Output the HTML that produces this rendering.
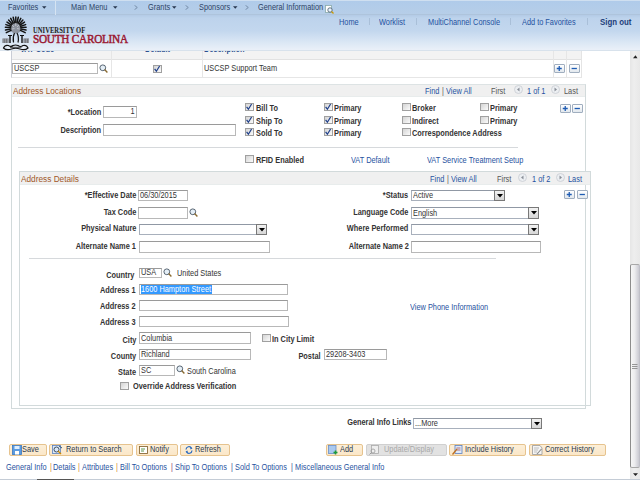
<!DOCTYPE html>
<html><head><meta charset="utf-8"><style>
html,body{margin:0;padding:0;width:640px;height:480px;overflow:hidden;background:#fff;position:relative}
body{font-family:"Liberation Sans",sans-serif}
.t{position:absolute;white-space:nowrap;line-height:10px}
</style></head><body>
<div style="position:absolute;left:11px;top:50px;width:571px;height:28px;box-sizing:border-box;border-left:1px solid #c9cdd6;border-right:1px solid #e4e4e4;border-bottom:1px solid #e6e6e6;background:#fff"></div>
<div style="position:absolute;left:12px;top:50px;width:569px;height:10px;background:#f3f3f3;border-bottom:1px solid #e2e2e2;box-sizing:border-box"></div>
<div style="position:absolute;left:111px;top:50px;width:1px;height:27px;background:#e6e6e6"></div>
<div style="position:absolute;left:202px;top:50px;width:1px;height:27px;background:#e6e6e6"></div>
<div style="position:absolute;left:552.5px;top:50px;width:1.0px;height:27px;background:#e6e6e6"></div>
<div style="position:absolute;left:566px;top:50px;width:1px;height:27px;background:#e6e6e6"></div>
<div class="t" style="left:20px;top:45px;font-size:8.20px;font-weight:bold;color:#2b4f8f;transform:scaleX(0.9);transform-origin:0 0;">VAT Code</div>
<div class="t" style="left:145px;top:45px;font-size:8.20px;font-weight:bold;color:#2b4f8f;transform:scaleX(0.9);transform-origin:0 0;">Default</div>
<div class="t" style="left:204px;top:45px;font-size:8.20px;font-weight:bold;color:#2b4f8f;transform:scaleX(0.9);transform-origin:0 0;">Description</div>
<div style="position:absolute;left:12px;top:63px;width:86px;height:11px;box-sizing:border-box;border:1px solid #b8b8b8;border-top-color:#9a9a9a;background:#fff"></div>
<div class="t" style="left:14px;top:64px;font-size:8.20px;font-weight:normal;color:#333;transform:scaleX(0.9);transform-origin:0 0;">USCSP</div>
<svg style="position:absolute;left:99px;top:64px" width="9" height="9"><circle cx="3.8" cy="3.8" r="2.9" fill="#e4eef6" stroke="#4a5866" stroke-width="0.9"/><path d="M5.6 5.6L8.4 8.4" stroke="#8a6a30" stroke-width="1.4"/></svg>
<div style="position:absolute;left:153px;top:65px;width:9px;height:8px;box-sizing:border-box;border:1px solid #a0a0a0;background:linear-gradient(135deg,#d4d4d4,#fbfbfb)"></div>
<svg style="position:absolute;left:153px;top:65px" width="8" height="8"><path d="M1.6 3.8L3.4 6.2L6.6 1" stroke="#1f3f8a" stroke-width="1.2" fill="none"/></svg>
<div class="t" style="left:204px;top:64px;font-size:8.20px;font-weight:normal;color:#333;transform:scaleX(0.9);transform-origin:0 0;">USCSP Support Team</div>
<div style="position:absolute;left:554px;top:64px;width:10.5px;height:9px;box-sizing:border-box;border:1px solid #a0aebf;border-radius:1px;background:linear-gradient(#ffffff,#e2e8ee)"></div>
<svg style="position:absolute;left:554px;top:64px" width="11" height="9"><path d="M5.25 2V7M2.75 4.5H7.75" stroke="#1f5cb4" stroke-width="1.3"/></svg>
<div style="position:absolute;left:569px;top:64px;width:10.5px;height:9px;box-sizing:border-box;border:1px solid #a0aebf;border-radius:1px;background:linear-gradient(#ffffff,#e2e8ee)"></div>
<svg style="position:absolute;left:569px;top:64px" width="11" height="9"><path d="M2.6 4.5H7.9" stroke="#1f5cb4" stroke-width="1.3"/></svg>
<div style="position:absolute;left:0px;top:0px;width:640px;height:15px;background:linear-gradient(#b0cbea,#b6cee8);border-top:1px solid #cfdff0;border-bottom:1px solid #aec4dc;box-sizing:border-box"></div>
<div style="position:absolute;left:0px;top:15px;width:640px;height:36px;background:linear-gradient(#b3cbe6 0px,#bdd3ec 3px,#c3d7ee 16px,#dce8f5 28px,#eaf0f8 35px,#d8e2ec 35px)"></div>
<div style="position:absolute;left:55px;top:1px;width:1px;height:14px;background:#d6e4f2"></div>
<div class="t" style="left:8px;top:3px;font-size:8.20px;font-weight:normal;color:#2e4466;transform:scaleX(0.9);transform-origin:0 0;">Favorites</div>
<div class="t" style="left:70.6px;top:3px;font-size:8.20px;font-weight:normal;color:#2e4466;transform:scaleX(0.9);transform-origin:0 0;">Main Menu</div>
<div class="t" style="left:147.5px;top:3px;font-size:8.20px;font-weight:normal;color:#2e4466;transform:scaleX(0.9);transform-origin:0 0;">Grants</div>
<div class="t" style="left:198.9px;top:3px;font-size:8.20px;font-weight:normal;color:#2e4466;transform:scaleX(0.9);transform-origin:0 0;">Sponsors</div>
<div class="t" style="left:258.4px;top:3px;font-size:8.20px;font-weight:normal;color:#2e4466;transform:scaleX(0.9);transform-origin:0 0;">General Information</div>
<svg style="position:absolute;left:42.3px;top:6px" width="5" height="3"><path d="M0 0.2H4.5L2.25 2.7Z" fill="#283850"/></svg>
<svg style="position:absolute;left:112.5px;top:6px" width="5" height="3"><path d="M0 0.2H4.5L2.25 2.7Z" fill="#283850"/></svg>
<svg style="position:absolute;left:172.3px;top:6px" width="5" height="3"><path d="M0 0.2H4.5L2.25 2.7Z" fill="#283850"/></svg>
<svg style="position:absolute;left:232.6px;top:6px" width="5" height="3"><path d="M0 0.2H4.5L2.25 2.7Z" fill="#283850"/></svg>
<svg style="position:absolute;left:133.5px;top:5px" width="4" height="5"><path d="M0.5 0.3L3.3 2.5L0.5 4.7" stroke="#6a7f9c" stroke-width="0.8" fill="none"/></svg>
<svg style="position:absolute;left:184.5px;top:5px" width="4" height="5"><path d="M0.5 0.3L3.3 2.5L0.5 4.7" stroke="#6a7f9c" stroke-width="0.8" fill="none"/></svg>
<svg style="position:absolute;left:244.5px;top:5px" width="4" height="5"><path d="M0.5 0.3L3.3 2.5L0.5 4.7" stroke="#6a7f9c" stroke-width="0.8" fill="none"/></svg>
<svg style="position:absolute;left:325px;top:5px" width="9" height="9"><rect x="0.5" y="0.5" width="6" height="7" fill="#fff" stroke="#8aa" stroke-width="0.8"/><circle cx="5" cy="5" r="2.2" fill="#e8f4ff" stroke="#456" stroke-width="0.8"/><path d="M6.5 6.5L8.5 8.5" stroke="#c90" stroke-width="1.2"/></svg>
<div class="t" style="left:338.5px;top:18px;font-size:8.20px;font-weight:normal;color:#1f52a0;transform:scaleX(0.9);transform-origin:0 0;">Home</div>
<div class="t" style="left:379.4px;top:18px;font-size:8.20px;font-weight:normal;color:#1f52a0;transform:scaleX(0.9);transform-origin:0 0;">Worklist</div>
<div class="t" style="left:427.8px;top:18px;font-size:8.20px;font-weight:normal;color:#1f52a0;transform:scaleX(0.9);transform-origin:0 0;">MultiChannel Console</div>
<div class="t" style="left:521.9px;top:18px;font-size:8.20px;font-weight:normal;color:#1f52a0;transform:scaleX(0.9);transform-origin:0 0;">Add to Favorites</div>
<div class="t" style="left:599.6px;top:17px;font-size:8.75px;font-weight:bold;color:#1f3f7a;transform:scaleX(0.9);transform-origin:0 0;">Sign out</div>
<div style="position:absolute;left:369px;top:18px;width:1px;height:7px;background:#a9bfd8"></div>
<div style="position:absolute;left:416px;top:18px;width:1px;height:7px;background:#a9bfd8"></div>
<div style="position:absolute;left:510px;top:18px;width:1px;height:7px;background:#a9bfd8"></div>
<div style="position:absolute;left:587px;top:18px;width:1px;height:7px;background:#a9bfd8"></div>
<div class="t" style="left:33px;top:25px;font-size:6.6px;font-weight:bold;color:#222;font-family:'Liberation Serif',serif;letter-spacing:0.02px;transform:scaleY(1.1);transform-origin:0 0">UNIVERSITY OF</div>
<div class="t" style="left:32.5px;top:31px;font-size:12.8px;line-height:16px;font-weight:normal;-webkit-text-stroke:0.5px #9a1832;color:#9a1832;font-family:'Liberation Serif',serif;letter-spacing:-0.3px;transform:scaleX(0.88);transform-origin:0 0">SOUTH CAROLINA</div>
<svg style="position:absolute;left:0px;top:15px" width="32" height="37" viewBox="0 15 32 37">
<ellipse cx="15.75" cy="27.5" rx="6" ry="6" fill="#8d939e"/>
<path d="M12 25L14 27M19 25L17 27M15.7 23V26M12 29L14.5 28.5M19.5 29L17 28.5" stroke="#c8ccd4" stroke-width="0.8"/><path d="M11.0 30.3L6.3 32.6" stroke="#141414" stroke-width="1.5" stroke-linecap="round"/><path d="M10.6 29.0L5.5 30.0" stroke="#141414" stroke-width="1.5" stroke-linecap="round"/><path d="M10.6 27.6L5.4 27.3" stroke="#141414" stroke-width="1.5" stroke-linecap="round"/><path d="M10.8 26.3L5.9 24.6" stroke="#141414" stroke-width="1.5" stroke-linecap="round"/><path d="M11.4 25.0L7.0 22.1" stroke="#141414" stroke-width="1.5" stroke-linecap="round"/><path d="M12.2 24.0L8.6 20.0" stroke="#141414" stroke-width="1.5" stroke-linecap="round"/><path d="M13.2 23.2L10.7 18.4" stroke="#141414" stroke-width="1.5" stroke-linecap="round"/><path d="M14.5 22.7L13.2 17.3" stroke="#141414" stroke-width="1.5" stroke-linecap="round"/><path d="M15.8 22.5L15.8 17.0" stroke="#141414" stroke-width="1.5" stroke-linecap="round"/><path d="M17.0 22.7L18.3 17.3" stroke="#141414" stroke-width="1.5" stroke-linecap="round"/><path d="M18.3 23.2L20.8 18.4" stroke="#141414" stroke-width="1.5" stroke-linecap="round"/><path d="M19.3 24.0L22.9 20.0" stroke="#141414" stroke-width="1.5" stroke-linecap="round"/><path d="M20.1 25.0L24.5 22.1" stroke="#141414" stroke-width="1.5" stroke-linecap="round"/><path d="M20.7 26.3L25.6 24.6" stroke="#141414" stroke-width="1.5" stroke-linecap="round"/><path d="M20.9 27.6L26.1 27.3" stroke="#141414" stroke-width="1.5" stroke-linecap="round"/><path d="M20.9 29.0L26.0 30.0" stroke="#141414" stroke-width="1.5" stroke-linecap="round"/><path d="M20.5 30.3L25.2 32.6" stroke="#141414" stroke-width="1.5" stroke-linecap="round"/>
<g fill="#6a6e74"><rect x="2.5" y="38.5" width="6" height="4.5"/><rect x="23.5" y="38.5" width="5.5" height="4.5"/></g>
<g stroke="#b8bcc4" stroke-width="0.6"><path d="M3.8 38.5V43M5.6 38.5V43M7.4 38.5V43M24.8 38.5V43M26.6 38.5V43M28.4 38.5V43"/></g>
<path d="M10 35.5V43M22 35.5V43" stroke="#111" stroke-width="1.4"/>
<path d="M8 35.5H12M20 35.5H24" stroke="#111" stroke-width="1"/>
<path d="M14.5 33Q12.5 37 13.5 42.5M17 33Q19.2 37 18 42.5" stroke="#111" stroke-width="1.2" fill="none"/>
<path d="M3.5 48Q5 44.5 8.5 45.5Q11 47.5 13 45.5Q15.5 44.5 18 45.5Q20.5 47.5 23 45.5Q26.5 44.5 28 48Q25 50.8 20 49Q15.7 47.5 11.5 49Q6.5 50.8 3.5 48Z" fill="none" stroke="#111" stroke-width="1.2"/>
<path d="M10 47.3H21.5" stroke="#333" stroke-width="0.9"/>
</svg>
<div style="position:absolute;left:11px;top:84px;width:575px;height:325px;box-sizing:border-box;border:1px solid #d2dadb;border-top-color:#dde3e4"></div>
<div style="position:absolute;left:12px;top:85px;width:573px;height:11px;background:#f0f0f0"></div>
<div style="position:absolute;left:12px;top:96px;width:573px;height:1px;background:#e8ecec"></div>
<div class="t" style="left:13px;top:86px;font-size:9.20px;font-weight:normal;color:#a0592a;transform:scaleX(0.9);transform-origin:0 0;">Address Locations</div>
<div class="t" style="left:425px;top:87px;font-size:8.20px;font-weight:normal;color:#1f52a0;transform:scaleX(0.9);transform-origin:0 0;">Find</div>
<div class="t" style="left:442.3px;top:87px;font-size:8.20px;font-weight:normal;color:#555;transform:scaleX(0.9);transform-origin:0 0;">|</div>
<div class="t" style="left:446px;top:87px;font-size:8.20px;font-weight:normal;color:#1f52a0;transform:scaleX(0.9);transform-origin:0 0;">View All</div>
<div class="t" style="left:491px;top:87px;font-size:8.20px;font-weight:normal;color:#555;transform:scaleX(0.9);transform-origin:0 0;">First</div>
<svg style="position:absolute;left:514px;top:85px" width="9" height="9"><circle cx="4.5" cy="4.5" r="4" fill="#eceff2" stroke="#c8ccd2" stroke-width="0.8"/><path d="M5.5 2.5L3 4.5L5.5 6.5Z" fill="#8a9099"/></svg>
<div class="t" style="left:527px;top:87px;font-size:8.20px;font-weight:normal;color:#1f52a0;transform:scaleX(0.9);transform-origin:0 0;">1 of 1</div>
<svg style="position:absolute;left:551px;top:85px" width="9" height="9"><circle cx="4.5" cy="4.5" r="4" fill="#eceff2" stroke="#c8ccd2" stroke-width="0.8"/><path d="M3.5 2.5L6 4.5L3.5 6.5Z" fill="#8a9099"/></svg>
<div class="t" style="left:563.5px;top:87px;font-size:8.20px;font-weight:normal;color:#555;transform:scaleX(0.9);transform-origin:0 0;">Last</div>
<div class="t" style="right:539px;top:108px;font-size:8.20px;font-weight:bold;color:#333;transform:scaleX(0.9);transform-origin:100% 0;">*Location</div>
<div style="position:absolute;left:103px;top:106px;width:34px;height:11.5px;box-sizing:border-box;border:1px solid #b8b8b8;border-top-color:#9a9a9a;background:#fff"></div>
<div class="t" style="right:505px;top:107px;font-size:8.20px;font-weight:normal;color:#333;transform:scaleX(0.9);transform-origin:100% 0;">1</div>
<div class="t" style="right:539px;top:126px;font-size:8.20px;font-weight:bold;color:#333;transform:scaleX(0.9);transform-origin:100% 0;">Description</div>
<div style="position:absolute;left:103px;top:124px;width:133px;height:11.5px;box-sizing:border-box;border:1px solid #b8b8b8;border-top-color:#9a9a9a;background:#fff"></div>
<div style="position:absolute;left:245px;top:103px;width:9px;height:8px;box-sizing:border-box;border:1px solid #a0a0a0;background:linear-gradient(135deg,#d4d4d4,#fbfbfb)"></div>
<svg style="position:absolute;left:245px;top:103px" width="8" height="8"><path d="M1.6 3.8L3.4 6.2L6.6 1" stroke="#1f3f8a" stroke-width="1.2" fill="none"/></svg>
<div class="t" style="left:256px;top:104px;font-size:8.20px;font-weight:bold;color:#333;transform:scaleX(0.9);transform-origin:0 0;">Bill To</div>
<div style="position:absolute;left:324px;top:103px;width:9px;height:8px;box-sizing:border-box;border:1px solid #a0a0a0;background:linear-gradient(135deg,#d4d4d4,#fbfbfb)"></div>
<svg style="position:absolute;left:324px;top:103px" width="8" height="8"><path d="M1.6 3.8L3.4 6.2L6.6 1" stroke="#1f3f8a" stroke-width="1.2" fill="none"/></svg>
<div class="t" style="left:334px;top:104px;font-size:8.20px;font-weight:bold;color:#333;transform:scaleX(0.9);transform-origin:0 0;">Primary</div>
<div style="position:absolute;left:245px;top:116px;width:9px;height:8px;box-sizing:border-box;border:1px solid #a0a0a0;background:linear-gradient(135deg,#d4d4d4,#fbfbfb)"></div>
<svg style="position:absolute;left:245px;top:116px" width="8" height="8"><path d="M1.6 3.8L3.4 6.2L6.6 1" stroke="#1f3f8a" stroke-width="1.2" fill="none"/></svg>
<div class="t" style="left:256px;top:117px;font-size:8.20px;font-weight:bold;color:#333;transform:scaleX(0.9);transform-origin:0 0;">Ship To</div>
<div style="position:absolute;left:324px;top:116px;width:9px;height:8px;box-sizing:border-box;border:1px solid #a0a0a0;background:linear-gradient(135deg,#d4d4d4,#fbfbfb)"></div>
<svg style="position:absolute;left:324px;top:116px" width="8" height="8"><path d="M1.6 3.8L3.4 6.2L6.6 1" stroke="#1f3f8a" stroke-width="1.2" fill="none"/></svg>
<div class="t" style="left:334px;top:117px;font-size:8.20px;font-weight:bold;color:#333;transform:scaleX(0.9);transform-origin:0 0;">Primary</div>
<div style="position:absolute;left:245px;top:128px;width:9px;height:8px;box-sizing:border-box;border:1px solid #a0a0a0;background:linear-gradient(135deg,#d4d4d4,#fbfbfb)"></div>
<svg style="position:absolute;left:245px;top:128px" width="8" height="8"><path d="M1.6 3.8L3.4 6.2L6.6 1" stroke="#1f3f8a" stroke-width="1.2" fill="none"/></svg>
<div class="t" style="left:256px;top:129px;font-size:8.20px;font-weight:bold;color:#333;transform:scaleX(0.9);transform-origin:0 0;">Sold To</div>
<div style="position:absolute;left:324px;top:128px;width:9px;height:8px;box-sizing:border-box;border:1px solid #a0a0a0;background:linear-gradient(135deg,#d4d4d4,#fbfbfb)"></div>
<svg style="position:absolute;left:324px;top:128px" width="8" height="8"><path d="M1.6 3.8L3.4 6.2L6.6 1" stroke="#1f3f8a" stroke-width="1.2" fill="none"/></svg>
<div class="t" style="left:334px;top:129px;font-size:8.20px;font-weight:bold;color:#333;transform:scaleX(0.9);transform-origin:0 0;">Primary</div>
<div style="position:absolute;left:402px;top:103px;width:9px;height:8px;box-sizing:border-box;border:1px solid #a0a0a0;background:linear-gradient(135deg,#d4d4d4,#fbfbfb)"></div>
<div class="t" style="left:412px;top:104px;font-size:8.20px;font-weight:bold;color:#333;transform:scaleX(0.9);transform-origin:0 0;">Broker</div>
<div style="position:absolute;left:480px;top:103px;width:9px;height:8px;box-sizing:border-box;border:1px solid #a0a0a0;background:linear-gradient(135deg,#d4d4d4,#fbfbfb)"></div>
<div class="t" style="left:490px;top:104px;font-size:8.20px;font-weight:bold;color:#333;transform:scaleX(0.9);transform-origin:0 0;">Primary</div>
<div style="position:absolute;left:402px;top:116px;width:9px;height:8px;box-sizing:border-box;border:1px solid #a0a0a0;background:linear-gradient(135deg,#d4d4d4,#fbfbfb)"></div>
<div class="t" style="left:412px;top:117px;font-size:8.20px;font-weight:bold;color:#333;transform:scaleX(0.9);transform-origin:0 0;">Indirect</div>
<div style="position:absolute;left:480px;top:116px;width:9px;height:8px;box-sizing:border-box;border:1px solid #a0a0a0;background:linear-gradient(135deg,#d4d4d4,#fbfbfb)"></div>
<div class="t" style="left:490px;top:117px;font-size:8.20px;font-weight:bold;color:#333;transform:scaleX(0.9);transform-origin:0 0;">Primary</div>
<div style="position:absolute;left:402px;top:128px;width:9px;height:8px;box-sizing:border-box;border:1px solid #a0a0a0;background:linear-gradient(135deg,#d4d4d4,#fbfbfb)"></div>
<div class="t" style="left:412px;top:129px;font-size:8.20px;font-weight:bold;color:#333;transform:scaleX(0.9);transform-origin:0 0;">Correspondence Address</div>
<div style="position:absolute;left:560px;top:104px;width:10.5px;height:9px;box-sizing:border-box;border:1px solid #a0aebf;border-radius:1px;background:linear-gradient(#ffffff,#e2e8ee)"></div>
<svg style="position:absolute;left:560px;top:104px" width="11" height="9"><path d="M5.25 2V7M2.75 4.5H7.75" stroke="#1f5cb4" stroke-width="1.3"/></svg>
<div style="position:absolute;left:572px;top:104px;width:10.5px;height:9px;box-sizing:border-box;border:1px solid #a0aebf;border-radius:1px;background:linear-gradient(#ffffff,#e2e8ee)"></div>
<svg style="position:absolute;left:572px;top:104px" width="11" height="9"><path d="M2.6 4.5H7.9" stroke="#1f5cb4" stroke-width="1.3"/></svg>
<div style="position:absolute;left:18px;top:147px;width:500px;height:1px;background:#d6d9dc"></div>
<div style="position:absolute;left:245px;top:155px;width:9px;height:8px;box-sizing:border-box;border:1px solid #a0a0a0;background:linear-gradient(135deg,#d4d4d4,#fbfbfb)"></div>
<div class="t" style="left:256px;top:156px;font-size:8.20px;font-weight:bold;color:#333;transform:scaleX(0.9);transform-origin:0 0;">RFID Enabled</div>
<div class="t" style="left:351px;top:156px;font-size:8.20px;font-weight:normal;color:#1f52a0;transform:scaleX(0.9);transform-origin:0 0;">VAT Default</div>
<div class="t" style="left:427px;top:156px;font-size:8.20px;font-weight:normal;color:#1f52a0;transform:scaleX(0.9);transform-origin:0 0;">VAT Service Treatment Setup</div>
<div style="position:absolute;left:19px;top:171px;width:572px;height:235px;box-sizing:border-box;border:1px solid #d2dadb"></div>
<div style="position:absolute;left:20px;top:172px;width:570px;height:12px;background:#f0f0f0"></div>
<div style="position:absolute;left:20px;top:184px;width:570px;height:1px;background:#e8ecec"></div>
<div class="t" style="left:21px;top:174px;font-size:9.20px;font-weight:normal;color:#a0592a;transform:scaleX(0.9);transform-origin:0 0;">Address Details</div>
<div class="t" style="left:429.7px;top:175px;font-size:8.20px;font-weight:normal;color:#1f52a0;transform:scaleX(0.9);transform-origin:0 0;">Find</div>
<div class="t" style="left:446.8px;top:175px;font-size:8.20px;font-weight:normal;color:#555;transform:scaleX(0.9);transform-origin:0 0;">|</div>
<div class="t" style="left:451.2px;top:175px;font-size:8.20px;font-weight:normal;color:#1f52a0;transform:scaleX(0.9);transform-origin:0 0;">View All</div>
<div class="t" style="left:497px;top:175px;font-size:8.20px;font-weight:normal;color:#555;transform:scaleX(0.9);transform-origin:0 0;">First</div>
<svg style="position:absolute;left:517.5px;top:172.5px" width="9" height="9"><circle cx="4.5" cy="4.5" r="4" fill="#eceff2" stroke="#c8ccd2" stroke-width="0.8"/><path d="M5.5 2.5L3 4.5L5.5 6.5Z" fill="#8a9099"/></svg>
<div class="t" style="left:532px;top:175px;font-size:8.20px;font-weight:normal;color:#1f52a0;transform:scaleX(0.9);transform-origin:0 0;">1 of 2</div>
<svg style="position:absolute;left:556px;top:172.5px" width="9" height="9"><circle cx="4.5" cy="4.5" r="4" fill="#eceff2" stroke="#c8ccd2" stroke-width="0.8"/><path d="M3.5 2.5L6 4.5L3.5 6.5Z" fill="#8a9099"/></svg>
<div class="t" style="left:568px;top:175px;font-size:8.20px;font-weight:normal;color:#1f52a0;transform:scaleX(0.9);transform-origin:0 0;">Last</div>
<div class="t" style="right:504px;top:191px;font-size:8.20px;font-weight:bold;color:#333;transform:scaleX(0.9);transform-origin:100% 0;">*Effective Date</div>
<div style="position:absolute;left:138px;top:190px;width:50px;height:11px;box-sizing:border-box;border:1px solid #b8b8b8;border-top-color:#9a9a9a;background:#fff"></div>
<div class="t" style="left:140px;top:191px;font-size:8.20px;font-weight:normal;color:#333;transform:scaleX(0.9);transform-origin:0 0;">06/30/2015</div>
<div class="t" style="right:504px;top:208px;font-size:8.20px;font-weight:bold;color:#333;transform:scaleX(0.9);transform-origin:100% 0;">Tax Code</div>
<div style="position:absolute;left:138px;top:207px;width:50px;height:11.5px;box-sizing:border-box;border:1px solid #b8b8b8;border-top-color:#9a9a9a;background:#fff"></div>
<svg style="position:absolute;left:189px;top:208px" width="9" height="9"><circle cx="3.8" cy="3.8" r="2.9" fill="#e4eef6" stroke="#4a5866" stroke-width="0.9"/><path d="M5.6 5.6L8.4 8.4" stroke="#8a6a30" stroke-width="1.4"/></svg>
<div class="t" style="right:504px;top:224px;font-size:8.20px;font-weight:bold;color:#333;transform:scaleX(0.9);transform-origin:100% 0;">Physical Nature</div>
<div style="position:absolute;left:139px;top:224px;width:128px;height:11px;box-sizing:border-box;border:1px solid #a8b0bc;border-top-color:#9098a4;background:#fff"></div>
<div style="position:absolute;left:256px;top:224px;width:11px;height:11px;box-sizing:border-box;border:1px solid #787878;background:linear-gradient(#f2f2f2,#d6d6d6)"></div>
<svg style="position:absolute;left:258.5px;top:228.0px" width="6" height="4"><path d="M0 0H6L3 3.5Z" fill="#000"/></svg>
<div class="t" style="right:504px;top:242px;font-size:8.20px;font-weight:bold;color:#333;transform:scaleX(0.9);transform-origin:100% 0;">Alternate Name 1</div>
<div style="position:absolute;left:139px;top:241px;width:131px;height:12px;box-sizing:border-box;border:1px solid #b8b8b8;border-top-color:#9a9a9a;background:#fff"></div>
<div class="t" style="right:231.5px;top:191px;font-size:8.20px;font-weight:bold;color:#333;transform:scaleX(0.9);transform-origin:100% 0;">*Status</div>
<div style="position:absolute;left:411px;top:190px;width:94px;height:11px;box-sizing:border-box;border:1px solid #a8b0bc;border-top-color:#9098a4;background:#fff"></div>
<div style="position:absolute;left:494px;top:190px;width:11px;height:11px;box-sizing:border-box;border:1px solid #787878;background:linear-gradient(#f2f2f2,#d6d6d6)"></div>
<svg style="position:absolute;left:496.5px;top:194.0px" width="6" height="4"><path d="M0 0H6L3 3.5Z" fill="#000"/></svg>
<div class="t" style="left:413px;top:191px;font-size:8.20px;font-weight:normal;color:#333;transform:scaleX(0.9);transform-origin:0 0;">Active</div>
<div class="t" style="right:231.5px;top:208px;font-size:8.20px;font-weight:bold;color:#333;transform:scaleX(0.9);transform-origin:100% 0;">Language Code</div>
<div style="position:absolute;left:411px;top:207px;width:128px;height:11.5px;box-sizing:border-box;border:1px solid #a8b0bc;border-top-color:#9098a4;background:#fff"></div>
<div style="position:absolute;left:528px;top:207px;width:11px;height:11.5px;box-sizing:border-box;border:1px solid #787878;background:linear-gradient(#f2f2f2,#d6d6d6)"></div>
<svg style="position:absolute;left:530.5px;top:211.25px" width="6" height="4"><path d="M0 0H6L3 3.5Z" fill="#000"/></svg>
<div class="t" style="left:413px;top:209px;font-size:8.20px;font-weight:normal;color:#333;transform:scaleX(0.9);transform-origin:0 0;">English</div>
<div class="t" style="right:231.5px;top:224px;font-size:8.20px;font-weight:bold;color:#333;transform:scaleX(0.9);transform-origin:100% 0;">Where Performed</div>
<div style="position:absolute;left:411px;top:224px;width:128px;height:11px;box-sizing:border-box;border:1px solid #a8b0bc;border-top-color:#9098a4;background:#fff"></div>
<div style="position:absolute;left:528px;top:224px;width:11px;height:11px;box-sizing:border-box;border:1px solid #787878;background:linear-gradient(#f2f2f2,#d6d6d6)"></div>
<svg style="position:absolute;left:530.5px;top:228.0px" width="6" height="4"><path d="M0 0H6L3 3.5Z" fill="#000"/></svg>
<div class="t" style="right:231.5px;top:242px;font-size:8.20px;font-weight:bold;color:#333;transform:scaleX(0.9);transform-origin:100% 0;">Alternate Name 2</div>
<div style="position:absolute;left:411px;top:241px;width:130px;height:12px;box-sizing:border-box;border:1px solid #b8b8b8;border-top-color:#9a9a9a;background:#fff"></div>
<div style="position:absolute;left:564px;top:190px;width:10.5px;height:9px;box-sizing:border-box;border:1px solid #a0aebf;border-radius:1px;background:linear-gradient(#ffffff,#e2e8ee)"></div>
<svg style="position:absolute;left:564px;top:190px" width="11" height="9"><path d="M5.25 2V7M2.75 4.5H7.75" stroke="#1f5cb4" stroke-width="1.3"/></svg>
<div style="position:absolute;left:577px;top:190px;width:10.5px;height:9px;box-sizing:border-box;border:1px solid #a0aebf;border-radius:1px;background:linear-gradient(#ffffff,#e2e8ee)"></div>
<svg style="position:absolute;left:577px;top:190px" width="11" height="9"><path d="M2.6 4.5H7.9" stroke="#1f5cb4" stroke-width="1.3"/></svg>
<div style="position:absolute;left:29px;top:258px;width:467px;height:1px;background:#d6d9dc"></div>
<div class="t" style="right:505.5px;top:271px;font-size:8.20px;font-weight:bold;color:#333;transform:scaleX(0.9);transform-origin:100% 0;">Country</div>
<div style="position:absolute;left:139px;top:267.5px;width:23px;height:10.0px;box-sizing:border-box;border:1px solid #b8b8b8;border-top-color:#9a9a9a;background:#fff"></div>
<div class="t" style="left:141px;top:268px;font-size:8.20px;font-weight:normal;color:#333;transform:scaleX(0.9);transform-origin:0 0;">USA</div>
<svg style="position:absolute;left:163px;top:268px" width="9" height="9"><circle cx="3.8" cy="3.8" r="2.9" fill="#e4eef6" stroke="#4a5866" stroke-width="0.9"/><path d="M5.6 5.6L8.4 8.4" stroke="#8a6a30" stroke-width="1.4"/></svg>
<div class="t" style="left:177px;top:269px;font-size:8.20px;font-weight:normal;color:#333;transform:scaleX(0.9);transform-origin:0 0;">United States</div>
<div class="t" style="right:504.2px;top:286px;font-size:8.20px;font-weight:bold;color:#333;transform:scaleX(0.9);transform-origin:100% 0;">Address 1</div>
<div style="position:absolute;left:139px;top:284px;width:149px;height:10.5px;box-sizing:border-box;border:1px solid #b8b8b8;border-top-color:#9a9a9a;background:#fff"></div>
<div style="position:absolute;left:141px;top:285px;width:71px;height:9px;background:#3399ff"></div>
<div class="t" style="left:141px;top:285px;font-size:8.20px;font-weight:normal;color:#fff;transform:scaleX(0.9);transform-origin:0 0;">1600 Hampton Street</div>
<div class="t" style="right:504.2px;top:302px;font-size:8.20px;font-weight:bold;color:#333;transform:scaleX(0.9);transform-origin:100% 0;">Address 2</div>
<div style="position:absolute;left:139px;top:300px;width:149px;height:11px;box-sizing:border-box;border:1px solid #b8b8b8;border-top-color:#9a9a9a;background:#fff"></div>
<div class="t" style="right:504.2px;top:318px;font-size:8.20px;font-weight:bold;color:#333;transform:scaleX(0.9);transform-origin:100% 0;">Address 3</div>
<div style="position:absolute;left:139px;top:316px;width:150px;height:11px;box-sizing:border-box;border:1px solid #b8b8b8;border-top-color:#9a9a9a;background:#fff"></div>
<div class="t" style="left:410.3px;top:303px;font-size:8.20px;font-weight:normal;color:#1f52a0;transform:scaleX(0.9);transform-origin:0 0;">View Phone Information</div>
<div class="t" style="right:503.7px;top:336px;font-size:8.20px;font-weight:bold;color:#333;transform:scaleX(0.9);transform-origin:100% 0;">City</div>
<div style="position:absolute;left:139px;top:332px;width:112px;height:11.5px;box-sizing:border-box;border:1px solid #b8b8b8;border-top-color:#9a9a9a;background:#fff"></div>
<div class="t" style="left:141px;top:334px;font-size:8.20px;font-weight:normal;color:#333;transform:scaleX(0.9);transform-origin:0 0;">Columbia</div>
<div style="position:absolute;left:262px;top:334px;width:9px;height:8px;box-sizing:border-box;border:1px solid #a0a0a0;background:linear-gradient(135deg,#d4d4d4,#fbfbfb)"></div>
<div class="t" style="left:272px;top:335px;font-size:8.20px;font-weight:bold;color:#333;transform:scaleX(0.9);transform-origin:0 0;">In City Limit</div>
<div class="t" style="right:503.7px;top:352px;font-size:8.20px;font-weight:bold;color:#333;transform:scaleX(0.9);transform-origin:100% 0;">County</div>
<div style="position:absolute;left:139px;top:349px;width:112px;height:10.5px;box-sizing:border-box;border:1px solid #b8b8b8;border-top-color:#9a9a9a;background:#fff"></div>
<div class="t" style="left:141px;top:350px;font-size:8.20px;font-weight:normal;color:#333;transform:scaleX(0.9);transform-origin:0 0;">Richland</div>
<div class="t" style="right:319px;top:352px;font-size:8.20px;font-weight:bold;color:#333;transform:scaleX(0.9);transform-origin:100% 0;">Postal</div>
<div style="position:absolute;left:323.5px;top:348.5px;width:63.0px;height:11.0px;box-sizing:border-box;border:1px solid #b8b8b8;border-top-color:#9a9a9a;background:#fff"></div>
<div class="t" style="left:325.5px;top:350px;font-size:8.20px;font-weight:normal;color:#333;transform:scaleX(0.9);transform-origin:0 0;">29208-3403</div>
<div class="t" style="right:503.7px;top:368px;font-size:8.20px;font-weight:bold;color:#333;transform:scaleX(0.9);transform-origin:100% 0;">State</div>
<div style="position:absolute;left:139px;top:364.5px;width:35.5px;height:11.0px;box-sizing:border-box;border:1px solid #b8b8b8;border-top-color:#9a9a9a;background:#fff"></div>
<div class="t" style="left:141px;top:366px;font-size:8.20px;font-weight:normal;color:#333;transform:scaleX(0.9);transform-origin:0 0;">SC</div>
<svg style="position:absolute;left:176px;top:365px" width="9" height="9"><circle cx="3.8" cy="3.8" r="2.9" fill="#e4eef6" stroke="#4a5866" stroke-width="0.9"/><path d="M5.6 5.6L8.4 8.4" stroke="#8a6a30" stroke-width="1.4"/></svg>
<div class="t" style="left:187px;top:367px;font-size:8.20px;font-weight:normal;color:#333;transform:scaleX(0.9);transform-origin:0 0;">South Carolina</div>
<div style="position:absolute;left:120px;top:382px;width:9px;height:8px;box-sizing:border-box;border:1px solid #a0a0a0;background:linear-gradient(135deg,#d4d4d4,#fbfbfb)"></div>
<div class="t" style="left:133px;top:382px;font-size:8.20px;font-weight:bold;color:#333;transform:scaleX(0.9);transform-origin:0 0;">Override Address Verification</div>
<div class="t" style="right:229px;top:418px;font-size:8.20px;font-weight:bold;color:#333;transform:scaleX(0.9);transform-origin:100% 0;">General Info Links</div>
<div style="position:absolute;left:413px;top:418px;width:129px;height:10.5px;box-sizing:border-box;border:1px solid #a8b0bc;border-top-color:#9098a4;background:#fff"></div>
<div style="position:absolute;left:531px;top:418px;width:11px;height:10.5px;box-sizing:border-box;border:1px solid #787878;background:linear-gradient(#f2f2f2,#d6d6d6)"></div>
<svg style="position:absolute;left:533.5px;top:421.75px" width="6" height="4"><path d="M0 0H6L3 3.5Z" fill="#000"/></svg>
<div class="t" style="left:415px;top:419px;font-size:8.20px;font-weight:normal;color:#333;transform:scaleX(0.9);transform-origin:0 0;">...More</div>
<div style="position:absolute;left:9px;top:443.6px;width:38px;height:12.399999999999977px;box-sizing:border-box;border:1px solid #e6c38e;border-radius:2px;background:linear-gradient(#fcefd9,#fbe7c8)"></div>
<div class="t" style="left:22px;top:445px;font-size:8.20px;font-weight:normal;color:#2a3a4e;transform:scaleX(0.9);transform-origin:0 0;">Save</div>
<svg style="position:absolute;left:11.5px;top:444.5px" width="11" height="10" viewBox="0 0 11 10"><rect x="0.5" y="0.5" width="9" height="9" fill="#5b9be0" stroke="#3a78c0" stroke-width="0.8"/><rect x="2.5" y="1" width="5" height="3" fill="#dfefff"/><rect x="3" y="6" width="4" height="3.5" fill="#fff"/></svg>
<div style="position:absolute;left:49px;top:443.6px;width:84px;height:12.399999999999977px;box-sizing:border-box;border:1px solid #e6c38e;border-radius:2px;background:linear-gradient(#fcefd9,#fbe7c8)"></div>
<div class="t" style="left:65.8px;top:445px;font-size:8.20px;font-weight:normal;color:#2a3a4e;transform:scaleX(0.9);transform-origin:0 0;">Return to Search</div>
<svg style="position:absolute;left:52px;top:444.5px" width="11" height="10" viewBox="0 0 11 10"><rect x="0.5" y="0.5" width="8" height="8" fill="#dbe8f8" stroke="#5a80c0" stroke-width="0.8"/><circle cx="4.5" cy="4.5" r="2.5" fill="none" stroke="#345" stroke-width="0.9"/><path d="M6 6L9 9" stroke="#c80" stroke-width="1.2"/><path d="M7 1L10 3" stroke="#357" stroke-width="1"/></svg>
<div style="position:absolute;left:135.5px;top:443.6px;width:42.5px;height:12.399999999999977px;box-sizing:border-box;border:1px solid #e6c38e;border-radius:2px;background:linear-gradient(#fcefd9,#fbe7c8)"></div>
<div class="t" style="left:149.8px;top:445px;font-size:8.20px;font-weight:normal;color:#2a3a4e;transform:scaleX(0.9);transform-origin:0 0;">Notify</div>
<svg style="position:absolute;left:139px;top:444.5px" width="11" height="10" viewBox="0 0 11 10"><rect x="0.5" y="1.5" width="8" height="7" fill="#fff" stroke="#8a6a3a" stroke-width="0.9"/><path d="M2 4H6M2 6H5" stroke="#4a8a3a" stroke-width="0.9"/></svg>
<div style="position:absolute;left:180px;top:443.6px;width:49.5px;height:12.399999999999977px;box-sizing:border-box;border:1px solid #e6c38e;border-radius:2px;background:linear-gradient(#fcefd9,#fbe7c8)"></div>
<div class="t" style="left:195px;top:445px;font-size:8.20px;font-weight:normal;color:#2a3a4e;transform:scaleX(0.9);transform-origin:0 0;">Refresh</div>
<svg style="position:absolute;left:183.5px;top:444.5px" width="11" height="10" viewBox="0 0 11 10"><path d="M2 4.5A3 3 0 0 1 7.5 3" stroke="#2a6ac0" stroke-width="1.2" fill="none"/><path d="M8 5.5A3 3 0 0 1 2.5 7" stroke="#2a6ac0" stroke-width="1.2" fill="none"/><path d="M6 1.5L8.5 3.5L6.5 4.5Z" fill="#2a6ac0"/><path d="M4 8.5L1.5 6.5L3.5 5.5Z" fill="#2a6ac0"/></svg>
<div style="position:absolute;left:325.5px;top:443.6px;width:37.5px;height:12.399999999999977px;box-sizing:border-box;border:1px solid #e6c38e;border-radius:2px;background:linear-gradient(#fcefd9,#fbe7c8)"></div>
<div class="t" style="left:340px;top:445px;font-size:8.20px;font-weight:normal;color:#2a3a4e;transform:scaleX(0.9);transform-origin:0 0;">Add</div>
<svg style="position:absolute;left:328px;top:444.5px" width="11" height="10" viewBox="0 0 11 10"><rect x="0.5" y="0.5" width="7.5" height="8" fill="#a9c9f0" stroke="#6a90c8" stroke-width="0.8"/><path d="M7.5 5.5V9.5M5.5 7.5H9.5" stroke="#1e9a3a" stroke-width="1.5"/></svg>
<div style="position:absolute;left:365.5px;top:443.6px;width:81.0px;height:12.399999999999977px;box-sizing:border-box;border:1px solid #d0d0d0;border-radius:2px;background:#e2e2e2"></div>
<div class="t" style="left:383.5px;top:445px;font-size:8.20px;font-weight:normal;color:#a8a8a8;transform:scaleX(0.9);transform-origin:0 0;">Update/Display</div>
<svg style="position:absolute;left:369px;top:444.5px" width="11" height="10" viewBox="0 0 11 10"><rect x="2.5" y="0.5" width="7" height="8" fill="#eee" stroke="#aaa" stroke-width="0.8"/><circle cx="4" cy="6" r="2" fill="none" stroke="#999" stroke-width="0.8"/><path d="M2.5 7.5L0.5 9.5" stroke="#999"/></svg>
<div style="position:absolute;left:449px;top:443.6px;width:77px;height:12.399999999999977px;box-sizing:border-box;border:1px solid #e6c38e;border-radius:2px;background:linear-gradient(#fcefd9,#fbe7c8)"></div>
<div class="t" style="left:465.3px;top:445px;font-size:8.20px;font-weight:normal;color:#2a3a4e;transform:scaleX(0.9);transform-origin:0 0;">Include History</div>
<svg style="position:absolute;left:451.5px;top:444.5px" width="11" height="10" viewBox="0 0 11 10"><rect x="3" y="0.5" width="7" height="8" fill="#dfeafa" stroke="#5a80c0" stroke-width="0.8"/><path d="M4.5 3H8.5M4.5 5H8.5" stroke="#a04040" stroke-width="0.7"/><path d="M0.5 9.5L5 4" stroke="#c07020" stroke-width="1.3"/></svg>
<div style="position:absolute;left:529px;top:443.6px;width:77px;height:12.399999999999977px;box-sizing:border-box;border:1px solid #e6c38e;border-radius:2px;background:linear-gradient(#fcefd9,#fbe7c8)"></div>
<div class="t" style="left:544.5px;top:445px;font-size:8.20px;font-weight:normal;color:#2a3a4e;transform:scaleX(0.9);transform-origin:0 0;">Correct History</div>
<svg style="position:absolute;left:531.5px;top:444.5px" width="11" height="10" viewBox="0 0 11 10"><path d="M0.5 0.5H8L10 3V9.5H0.5Z" fill="#f4f4f4" stroke="#999" stroke-width="0.8"/><path d="M2 3H7M2 5H6M2 7H5" stroke="#aaa" stroke-width="0.7"/><path d="M5 9L9.5 4" stroke="#888" stroke-width="1.1"/></svg>
<div class="t" style="left:6px;top:463px;font-size:8.20px;font-weight:normal;color:#1f52a0;transform:scaleX(0.9);transform-origin:0 0;">General Info</div>
<div class="t" style="left:53.3px;top:463px;font-size:8.20px;font-weight:normal;color:#1f52a0;transform:scaleX(0.9);transform-origin:0 0;">Details</div>
<div class="t" style="left:82.3px;top:463px;font-size:8.20px;font-weight:normal;color:#1f52a0;transform:scaleX(0.9);transform-origin:0 0;">Attributes</div>
<div class="t" style="left:120px;top:463px;font-size:8.20px;font-weight:normal;color:#1f52a0;transform:scaleX(0.9);transform-origin:0 0;">Bill To Options</div>
<div class="t" style="left:175px;top:463px;font-size:8.20px;font-weight:normal;color:#1f52a0;transform:scaleX(0.9);transform-origin:0 0;">Ship To Options</div>
<div class="t" style="left:235px;top:463px;font-size:8.20px;font-weight:normal;color:#1f52a0;transform:scaleX(0.9);transform-origin:0 0;">Sold To Options</div>
<div class="t" style="left:295px;top:463px;font-size:8.20px;font-weight:normal;color:#1f52a0;transform:scaleX(0.9);transform-origin:0 0;">Miscellaneous General Info</div>
<div class="t" style="left:49.5px;top:463px;font-size:8.20px;font-weight:normal;color:#d08a2a;transform:scaleX(0.9);transform-origin:0 0;">|</div>
<div class="t" style="left:78px;top:463px;font-size:8.20px;font-weight:normal;color:#d08a2a;transform:scaleX(0.9);transform-origin:0 0;">|</div>
<div class="t" style="left:115.7px;top:463px;font-size:8.20px;font-weight:normal;color:#d08a2a;transform:scaleX(0.9);transform-origin:0 0;">|</div>
<div class="t" style="left:171px;top:463px;font-size:8.20px;font-weight:normal;color:#8a3a6a;transform:scaleX(0.9);transform-origin:0 0;">|</div>
<div class="t" style="left:231px;top:463px;font-size:8.20px;font-weight:normal;color:#2a4a8a;transform:scaleX(0.9);transform-origin:0 0;">|</div>
<div class="t" style="left:291px;top:463px;font-size:8.20px;font-weight:normal;color:#2a4a8a;transform:scaleX(0.9);transform-origin:0 0;">|</div>
<div style="position:absolute;left:630px;top:51px;width:10px;height:428px;background:linear-gradient(90deg,#e6e6e6,#eeeeee 40%,#e8e8e8)"></div>
<svg style="position:absolute;left:632.5px;top:55px" width="5" height="4"><path d="M0 3.2H4.5L2.5 0.3Z" fill="#222"/></svg>
<div style="position:absolute;left:630px;top:264px;width:9.5px;height:204px;box-sizing:border-box;border:1px solid #a8a8a8;border-left-color:#8c8c8c;border-right-color:#c0c0c8;border-radius:2px;background:linear-gradient(90deg,#f6f6f6,#ececee 45%,#cacad2)"></div>
<svg style="position:absolute;left:632px;top:364px" width="6" height="6"><path d="M0 0.5H5.5M0 2.5H5.5M0 4.5H5.5" stroke="#808080" stroke-width="0.8"/></svg>
<svg style="position:absolute;left:632.5px;top:472.5px" width="6" height="4"><path d="M0 0.3H5L2.5 3Z" fill="#222"/></svg>
<div style="position:absolute;left:0px;top:479px;width:640px;height:1px;background:#c4ccd6"></div>
<div style="position:absolute;left:37px;top:479px;width:37px;height:1px;background:#555"></div>
</body></html>
